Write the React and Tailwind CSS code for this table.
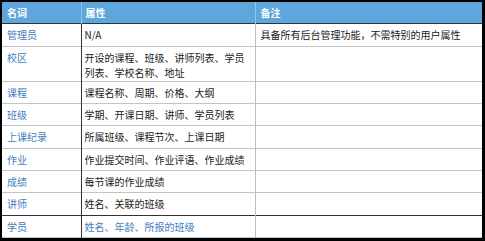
const rows = [
  { name: '管理员', attr: 'N/A', note: '具备所有后台管理功能，不需特别的用户属性', h: 'h-[23px]' },
  { name: '校区', attr: '开设的课程、班级、讲师列表、学员列表、学校名称、地址', note: '', h: 'h-[35px]' },
  { name: '课程', attr: '课程名称、周期、价格、大纲', note: '', h: 'h-[22px]' },
  { name: '班级', attr: '学期、开课日期、讲师、学员列表', note: '', h: 'h-[22px]' },
  { name: '上课纪录', attr: '所属班级、课程节次、上课日期', note: '', h: 'h-[23px]' },
  { name: '作业', attr: '作业提交时间、作业评语、作业成绩', note: '', h: 'h-[22px]' },
  { name: '成绩', attr: '每节课的作业成绩', note: '', h: 'h-[22px]' },
  { name: '讲师', attr: '姓名、关联的班级', note: '', h: 'h-[23px]', dark: true },
  { name: '学员', attr: '姓名、年龄、所报的班级', note: '', h: 'h-[22px]', blue: true },
];

export default function App() {
  return (
    <div
      className="h-[241px] w-[485px] overflow-hidden border-t-2 border-l-2 border-r-[3px] border-b-[3px] border-black bg-white text-[10px] leading-[15px]"
      style={{ fontFamily: '"Noto Sans CJK SC", "Noto Sans", sans-serif' }}
    >
      <table className="w-full table-fixed border-collapse">
        <colgroup>
          <col className="w-[79px]" />
          <col className="w-[174px]" />
          <col />
        </colgroup>
        <thead>
          <tr className="h-[21px] bg-[#5ea7dc] text-left font-semibold text-white">
            <th className="border-r border-[#8fc3ea] pl-[5px] font-semibold">名词</th>
            <th className="border-r border-[#8fc3ea] pl-[4px] font-semibold">属性</th>
            <th className="pl-[5px] font-semibold">备注</th>
          </tr>
        </thead>
        <tbody>
          {rows.map((r, i) => (
            <tr
              key={r.name}
              className={`${r.h} ${i === 0 ? 'border-t border-t-[#333]' : ''} ${
                r.dark ? 'border-b border-b-[#333]' : 'border-b border-b-[#c4c4c4]'
              }`}
            >
              <td className="border-r border-r-[#333] pl-[5px] pt-[3px] align-top text-[#3f7dbb]">{r.name}</td>
              <td
                className={`border-r border-r-[#bdbdbd] pl-[3px] pr-[4px] pt-[3px] align-top ${
                  r.blue ? 'text-[#3f7dbb]' : 'text-[#222]'
                }`}
              >
                {r.attr}
              </td>
              <td className="pl-[5px] pt-[3px] align-top text-[#222]">{r.note}</td>
            </tr>
          ))}
        </tbody>
      </table>
    </div>
  );
}
